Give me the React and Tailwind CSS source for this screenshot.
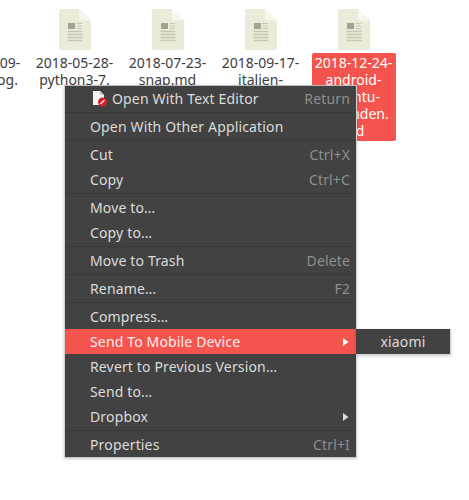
const files = [
  ['2018-04-09-', 'changelog.'],
  ['2018-05-28-', 'python3-7.'],
  ['2018-07-23-', 'snap.md'],
  ['2018-09-17-', 'italien-'],
];

const menuGroups = [
  [{ label: 'Open With Text Editor', hint: 'Return', icon: true }],
  [{ label: 'Open With Other Application' }],
  [{ label: 'Cut', hint: 'Ctrl+X' }, { label: 'Copy', hint: 'Ctrl+C' }],
  [{ label: 'Move to…' }, { label: 'Copy to…' }],
  [{ label: 'Move to Trash', hint: 'Delete' }],
  [{ label: 'Rename…', hint: 'F2' }],
  [
    { label: 'Compress…' },
    { label: 'Send To Mobile Device', arrow: true, active: true },
    { label: 'Revert to Previous Version…' },
    { label: 'Send to…' },
    { label: 'Dropbox', arrow: true },
  ],
  [{ label: 'Properties', hint: 'Ctrl+I' }],
];

function FileIcon() {
  return (
    <svg width="32" height="41" viewBox="0 0 32 41" className="block">
      <path d="M2 0H20L32 11V39a2 2 0 0 1-2 2H2a2 2 0 0 1-2-2V2a2 2 0 0 1 2-2Z" fill="#ecead9" />
      <path d="M20 0L32 11.500H21a1 1 0 0 1-1-1Z" fill="#f8f7ef" />
      <rect x="9" y="14" width="7" height="6" fill="#a5a293" />
      <path d="M17.500 14.500H23M17.500 17H23M17.500 19.500H23" stroke="#c9c6b4" strokeWidth="1" />
      <path d="M8.500 22.500H23.500M8.500 25.500H23.500M8.500 28.500H23.500M8.500 31.500H23.500" stroke="#c9c6b4" strokeWidth="1.500" />
    </svg>
  );
}

function EditorIcon() {
  return (
    <svg width="16" height="16" viewBox="0 0 16 16" className="block">
      <path d="M1 0H8L12 4V14H1Z" fill="#f4f4f4" />
      <path d="M8 0L12 4H8Z" fill="#c9c9c9" />
      <circle cx="10.500" cy="11" r="4.500" fill="#d3202a" />
      <path d="M8.500 13L12.500 9" stroke="#ffffff" strokeWidth="1.500" strokeDasharray="2 0.500" />
    </svg>
  );
}

function MenuRow({ item }) {
  return (
    <div className={`flex h-[25px] items-center pl-[25px] pr-[6px] tracking-[0.15px] ${item.active ? 'bg-[#f4544e] text-[#fdeeee]' : 'text-[#dcdcdc]'}`}>
      {item.icon && (
        <span className="ml-[2px] mr-[4px]">
          <EditorIcon />
        </span>
      )}
      <span>{item.label}</span>
      {item.hint && <span className="ml-auto text-[#8f8f8f]">{item.hint}</span>}
      {item.arrow && (
        <svg width="6" height="8" viewBox="0 0 6 8" className="ml-auto mr-[1px]">
          <path d="M0 0L5.500 4L0 8Z" fill={item.active ? '#ffffff' : '#dcdcdc'} />
        </svg>
      )}
    </div>
  );
}

export default function App() {
  return (
    <div className="relative h-[500px] w-[469px] overflow-hidden bg-white font-['Noto_Sans',sans-serif] text-[14px] leading-[17px] text-[#3d3d3d]">
      {/* desktop icons */}
      <div className="ml-[-65px] flex pt-[9px]">
        {files.map((lines, i) => (
          <div key={i} className="flex w-[93px] flex-col items-center">
            <FileIcon />
            <div className="mt-[3px] whitespace-nowrap px-[4px] pt-[1px] text-center">
              {lines.map((l) => (
                <div key={l}>{l}</div>
              ))}
            </div>
          </div>
        ))}
        <div className="flex w-[93px] flex-col items-center">
          <FileIcon />
          <div className="mt-[3px] w-[84px] rounded-[2px] bg-[#f4544e] pb-[2px] pt-[1px] text-center text-white">
            <div>2018-12-24-</div>
            <div>android-</div>
            <div>ubuntu-</div>
            <div>verbinden.</div>
            <div>md</div>
          </div>
        </div>
      </div>

      {/* context menu */}
      <div className="absolute left-[64px] top-[85px] w-[293px] border border-t-[#bdbdbd] border-x-[#d4d4d4] border-b-[#c4c4c4] bg-[#424242] shadow-[0_1px_3px_rgba(0,0,0,0.2)]">
        {menuGroups.map((group, i) => (
          <div key={i}>
            {i > 0 && (
              <div className="flex h-[3px] items-center">
                <div className="h-px w-full bg-[#393939]" />
              </div>
            )}
            {group.map((item) => (
              <MenuRow key={item.label} item={item} />
            ))}
          </div>
        ))}
      </div>

      {/* submenu */}
      <div className="absolute left-[356px] top-[329px] flex h-[26px] w-[95px] items-center justify-center border-b border-r border-[#d4d4d4] bg-[#424242] tracking-[0.15px] text-[#dcdcdc] shadow-[0_1px_3px_rgba(0,0,0,0.2)]">
        xiaomi
      </div>
    </div>
  );
}
